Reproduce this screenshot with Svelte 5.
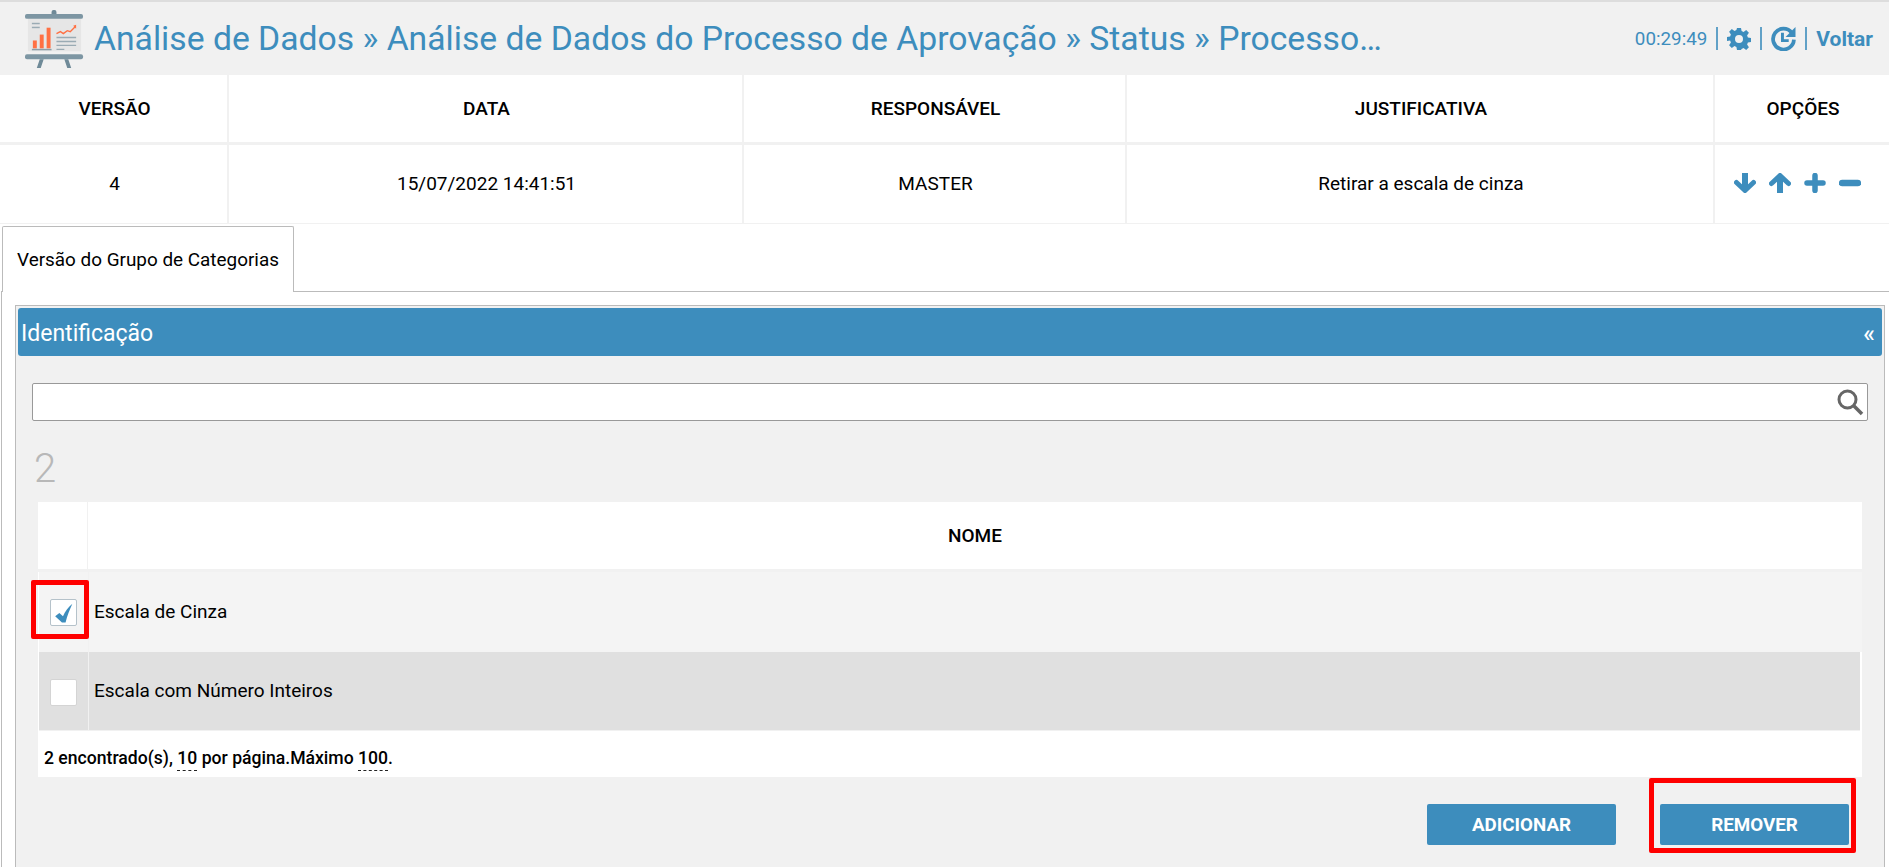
<script>
    const title =
        "Análise de Dados » Análise de Dados do Processo de Aprovação » Status » Processo…";
    const rows = [
        { name: "Escala de Cinza", checked: true },
        { name: "Escala com Número Inteiros", checked: false },
    ];
</script>

<div class="page">
    <header class="topbar">
        <svg class="logo" viewBox="0 0 60 60" aria-hidden="true">
            <rect x="27" y="0" width="5" height="6" rx="2" fill="#6f8a98" />
            <rect x="3" y="8" width="54" height="34" fill="#e6e6e6" />
            <rect x="0" y="4" width="59" height="5" rx="2" fill="#7d96a3" />
            <rect x="0" y="45" width="59" height="5" rx="2" fill="#7d96a3" />
            <path d="M15 50l-3 9h4l3-9zM44 50l3 9h-4l-3-9z" fill="#6f8a98" />
            <rect x="7" y="13" width="8" height="1.5" fill="#9aabb4" />
            <rect x="7" y="17" width="8" height="1.5" fill="#9aabb4" />
            <rect x="8" y="31" width="4" height="8" fill="#ff7043" />
            <rect x="15" y="25" width="4" height="14" fill="#ff7043" />
            <rect x="22" y="18" width="4" height="21" fill="#ff7043" />
            <rect x="7" y="39.5" width="20" height="1.5" fill="#8a9da7" />
            <path d="M32 24l4-2 3 2 4-3 3 1 5-5" fill="none" stroke="#ff7043" stroke-width="1.4" />
            <path d="M52 15l0 4-3-3z" fill="#ff7043" />
            <path d="M32 28h20M32 32h20M32 36h20M32 40h8" stroke="#9aabb4" stroke-width="1.4" />
        </svg>
        <h1>{title}</h1>
        <div class="session">
            <span class="time">00:29:49</span>
            <span class="sep"></span>
            <svg class="gear" viewBox="0 0 24 24" aria-hidden="true">
                <path
                    fill-rule="evenodd"
                    d="M10 1h4l.6 3.1 1.9.8L19.200 3.100l2.700 2.700-1.800 2.700.8 1.900 3.100.6v4l-3.100.6-.8 1.900 1.800 2.700-2.700 2.700-2.700-1.800-1.900.8L14 23h-4l-.6-3.100-1.900-.8-2.700 1.800-2.700-2.700 1.800-2.700-.8-1.900L0 14v-4l3.100-.6.8-1.900-1.800-2.700 2.700-2.700 2.700 1.800 1.900-.8zM12 8a4 4 0 1 0 0 8 4 4 0 0 0 0-8z"
                />
            </svg>
            <span class="sep"></span>
            <svg class="history" viewBox="0 0 24 24" aria-hidden="true">
                <path d="M20 6.500A10 10 0 1 0 22 13" fill="none" stroke="currentColor" stroke-width="3.600" />
                <path d="M23.500 1v9.500H14z" fill="currentColor" />
                <path d="M11 6.500v7.500h6" fill="none" stroke="currentColor" stroke-width="2.800" />
            </svg>
            <span class="sep"></span>
            <strong>Voltar</strong>
        </div>
    </header>

    <div class="versions">
        <div class="vrow head">
            <div>VERSÃO</div>
            <div>DATA</div>
            <div>RESPONSÁVEL</div>
            <div>JUSTIFICATIVA</div>
            <div>OPÇÕES</div>
        </div>
        <div class="vrow body">
            <div>4</div>
            <div>15/07/2022 14:41:51</div>
            <div>MASTER</div>
            <div>Retirar a escala de cinza</div>
            <div class="options">
                <svg viewBox="0 0 22 20" aria-hidden="true">
                    <path d="M11 0v17" fill="none" stroke="currentColor" stroke-width="6" />
                    <path d="M2.500 9.500l8.500 8 8.500-8" fill="none" stroke="currentColor" stroke-width="5" stroke-linecap="round" stroke-linejoin="round" />
                </svg>
                <svg viewBox="0 0 22 20" aria-hidden="true">
                    <path d="M11 20V3" fill="none" stroke="currentColor" stroke-width="6" />
                    <path d="M2.500 10.500l8.500-8 8.500 8" fill="none" stroke="currentColor" stroke-width="5" stroke-linecap="round" stroke-linejoin="round" />
                </svg>
                <svg viewBox="0 0 22 20" aria-hidden="true">
                    <path d="M11 2.500v15M3 10h16" fill="none" stroke="currentColor" stroke-width="5.500" stroke-linecap="round" />
                </svg>
                <svg viewBox="0 0 22 20" aria-hidden="true">
                    <path d="M3 10h16" fill="none" stroke="currentColor" stroke-width="6.500" stroke-linecap="round" />
                </svg>
            </div>
        </div>
    </div>

    <div class="tabs">
        <div class="tab">Versão do Grupo de Categorias</div>
    </div>

    <section class="tabpanel">
        <div class="fieldset">
            <div class="legend">
                <span>Identificação</span>
                <span class="collapse">«</span>
            </div>
            <div class="content">
                <div class="search">
                    <svg viewBox="0 0 28 28" aria-hidden="true">
                        <circle cx="11.500" cy="11.500" r="8.500" fill="none" stroke="#666" stroke-width="3" />
                        <path d="M18 18l8 8" stroke="#666" stroke-width="3.600" />
                    </svg>
                </div>
                <div class="count">2</div>
                <div class="grid">
                    <div class="grow ghead">
                        <div class="chk"></div>
                        <div class="nome">NOME</div>
                    </div>
                    {#each rows as row, i}
                        <div class="grow item" class:odd={i === 0} class:even={i === 1}>
                            <div class="chk">
                                <span class="box" class:on={row.checked}>
                                    {#if row.checked}
                                        <svg viewBox="0 0 24 24" aria-hidden="true">
                                            <path d="M4 15.500l4-3 3.500 3c2-4.500 5-8.500 9-12-2.500 5.500-5 11.500-6.500 18h-3.500z" fill="#3d8dbd" />
                                        </svg>
                                    {/if}
                                </span>
                            </div>
                            <div class="label">{row.name}</div>
                        </div>
                    {/each}
                    <div class="pager">
                        2 encontrado(s), <u>10</u> por página.Máximo <u>100</u>.
                    </div>
                </div>
                <div class="actions">
                    <button>ADICIONAR</button>
                    <button>REMOVER</button>
                </div>
            </div>
        </div>
    </section>

    <!-- marcações vermelhas da captura -->
    <div class="mark mark-check"></div>
    <div class="mark mark-remove"></div>
</div>

<style>
    :global(body) {
        margin: 0;
        font-family: Roboto, sans-serif;
        color: #000;
        background: #fff;
        overflow: hidden;
    }

    .page {
        position: relative;
        height: 867px;
        overflow: hidden;
    }

    .topbar {
        display: flex;
        align-items: center;
        height: 73px;
        border-top: 2px solid #ddd;
        background: #f1f1f1;
        color: #3d8dbd;
        padding: 0 16px 0 25px;
    }

    .logo {
        width: 59px;
        height: 59px;
        flex: none;
        margin-right: 10px;
        margin-top: 2px;
    }

    h1 {
        margin: 0;
        font-size: 33.7px;
        font-weight: 400;
        white-space: nowrap;
    }

    .session {
        margin-left: auto;
        display: flex;
        align-items: center;
        gap: 9px;
        font-size: 18.8px;
    }

    .session strong {
        font-size: 21px;
        font-weight: 700;
    }

    .sep {
        width: 2px;
        height: 23px;
        background: #3d8dbd;
        opacity: 0.8;
    }

    .gear {
        width: 24px;
        height: 24px;
        fill: currentColor;
    }

    .history {
        width: 25px;
        height: 25px;
    }

    .vrow {
        display: grid;
        grid-template-columns: 229px 515px 383px 588px 1fr;
        text-align: center;
        font-size: 19px;
    }

    .vrow > div {
        display: flex;
        align-items: center;
        justify-content: center;
        padding-left: 2px;
        border-right: 2px solid #f1f1f1;
    }

    .vrow > div:last-child {
        border-right: none;
    }

    .head {
        height: 67px;
        font-weight: 500;
        border-bottom: 3px solid #f1f1f1;
    }

    .body {
        height: 78px;
        border-bottom: 1px solid #f1f1f1;
    }

    .vrow.body > div {
        padding-bottom: 2px;
    }

    .vrow > .options {
        gap: 13px;
        padding: 0 9px 0 0;
        color: #3d8dbd;
    }

    .options svg {
        width: 22px;
        height: 20px;
    }

    .tabs {
        display: flex;
        margin-top: 2px;
        height: 65px;
        padding-left: 2px;
    }

    .tab {
        width: 292px;
        box-sizing: border-box;
        border: 1px solid #bbb;
        border-bottom: none;
        border-radius: 2px 2px 0 0;
        display: flex;
        align-items: center;
        justify-content: center;
        font-size: 18.9px;
        margin-bottom: -1px;
        background: #fff;
        position: relative;
        z-index: 1;
    }

    .tabpanel {
        border-top: 1px solid #bbb;
        border-left: 1px solid #bbb;
        margin-left: 1px;
        padding: 13px 4px 0 13px;
    }

    .fieldset {
        border: 1px solid #bbb;
        padding: 2px;
        background: #f1f1f1;
        height: 570px;
    }

    .legend {
        display: flex;
        align-items: center;
        justify-content: space-between;
        height: 48px;
        box-sizing: border-box;
        padding: 3px 4px 0 3px;
        background: #3d8dbd;
        color: #fff;
        font-size: 23px;
        border-radius: 3px;
    }

    .collapse {
        font-size: 24px;
        font-weight: 500;
        padding-right: 3px;
    }

    .content {
        padding: 27px 0 0 14px;
    }

    .search {
        display: flex;
        align-items: center;
        justify-content: flex-end;
        height: 38px;
        box-sizing: border-box;
        margin-right: 14px;
        padding-right: 3px;
        background: #fff;
        border: 1px solid #999;
        border-radius: 2px;
    }

    .search svg {
        width: 28px;
        height: 28px;
    }

    .count {
        margin: 24px 0 0 2px;
        height: 57px;
        line-height: 48px;
        font-size: 40px;
        font-weight: 300;
        color: #b8b8b8;
    }

    .grid {
        margin-left: 6px;
        margin-right: 20px;
        background: #fff;
    }

    .grow {
        display: flex;
    }

    .chk {
        width: 49px;
        flex: none;
        display: flex;
        align-items: center;
        justify-content: center;
        border-right: 1px solid #f1f1f1;
    }

    .ghead {
        height: 67px;
        border-bottom: 3px solid #f1f1f1;
    }

    .nome {
        flex: 1;
        display: flex;
        align-items: center;
        justify-content: center;
        font-size: 19px;
        font-weight: 500;
    }

    .item {
        margin-left: 1px;
        font-size: 19px;
    }

    .odd {
        height: 80px;
        background: #f4f4f4;
    }

    .even {
        height: 79px;
        box-sizing: border-box;
        background: #e0e0e0;
        margin-right: 2px;
        border-bottom: 1px solid #f1f1f1;
    }

    .odd .chk {
        padding-top: 1px;
    }

    .even .chk {
        padding-top: 2px;
    }

    .label {
        display: flex;
        align-items: center;
        padding: 0 0 2px 5px;
    }

    .box {
        width: 27px;
        height: 27px;
        box-sizing: border-box;
        background: #fff;
        border: 1px solid #d4d4d4;
        border-radius: 2px;
        display: block;
    }

    .box.on {
        border-color: #b5c2ca;
    }

    .box svg {
        display: block;
        width: 25px;
        height: 25px;
    }

    .pager {
        height: 46px;
        line-height: 55px;
        white-space: pre;
        padding-left: 6px;
        font-size: 17.6px;
        font-weight: 500;
    }

    .pager u {
        text-decoration: none;
        padding-bottom: 2px;
        border-bottom: 1px dashed #222;
    }

    .actions {
        display: flex;
        justify-content: flex-end;
        gap: 44px;
        margin-top: 27px;
        margin-right: 33px;
    }

    button {
        width: 189px;
        height: 41px;
        border: none;
        border-radius: 2px;
        background: #3d8dbd;
        color: #fff;
        font-family: Roboto, sans-serif;
        font-size: 18.8px;
        font-weight: 700;
    }

    .mark {
        position: absolute;
        box-sizing: border-box;
        border: 5px solid #f00;
        border-radius: 2px;
    }

    .mark-check {
        left: 31px;
        top: 580px;
        width: 58px;
        height: 59px;
    }

    .mark-remove {
        left: 1649px;
        top: 778px;
        width: 207px;
        height: 75px;
    }
</style>
